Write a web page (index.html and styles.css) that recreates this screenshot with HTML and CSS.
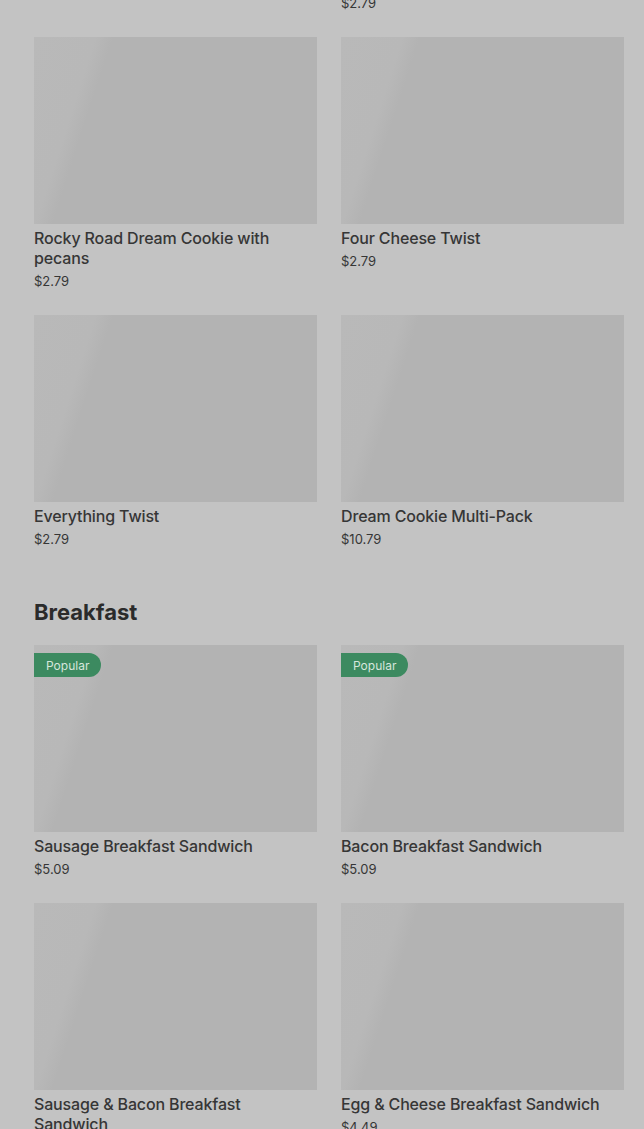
FILE: index.html
```html
<!DOCTYPE html>
<html>
<head>
<meta charset="utf-8">
<link rel="stylesheet" href="styles.css">
</head>
<body>
<main class="menu">
  <section class="category category-first">
    <div class="grid">
      <div class="card">
        <div class="thumb"></div>
        <div class="title">Cinnamon Dream Cookie</div>
      </div>
      <div class="card">
        <div class="thumb"></div>
        <div class="title">Cheddar Twist</div>
        <div class="price">$2.79</div>
      </div>
      <div class="card">
        <div class="thumb"></div>
        <div class="title">Rocky Road Dream Cookie with pecans</div>
        <div class="price">$2.79</div>
      </div>
      <div class="card">
        <div class="thumb"></div>
        <div class="title">Four Cheese Twist</div>
        <div class="price">$2.79</div>
      </div>
      <div class="card">
        <div class="thumb"></div>
        <div class="title">Everything Twist</div>
        <div class="price">$2.79</div>
      </div>
      <div class="card">
        <div class="thumb"></div>
        <div class="title">Dream Cookie Multi-Pack</div>
        <div class="price">$10.79</div>
      </div>
    </div>
  </section>

  <section class="category">
    <h2 class="heading">Breakfast</h2>
    <div class="grid">
      <div class="card">
        <div class="thumb"><span class="badge">Popular</span></div>
        <div class="title">Sausage Breakfast Sandwich</div>
        <div class="price">$5.09</div>
      </div>
      <div class="card">
        <div class="thumb"><span class="badge">Popular</span></div>
        <div class="title">Bacon Breakfast Sandwich</div>
        <div class="price">$5.09</div>
      </div>
      <div class="card">
        <div class="thumb"></div>
        <div class="title">Sausage &amp; Bacon Breakfast Sandwich</div>
        <div class="price">$5.49</div>
      </div>
      <div class="card">
        <div class="thumb"></div>
        <div class="title">Egg &amp; Cheese Breakfast Sandwich</div>
        <div class="price">$4.49</div>
      </div>
    </div>
  </section>
</main>
</body>
</html>
```

FILE: styles.css
```css
* { box-sizing: border-box; }
html, body { margin: 0; padding: 0; }
body {
  background: #c3c3c3;
  color: #2e2e2e;
  font-family: Inter, "Liberation Sans", sans-serif;
  overflow: hidden;
}
.menu {
  padding: 0 20px 0 34px;
}
.category-first {
  margin-top: -221px;
}
.grid {
  display: grid;
  grid-template-columns: 283px 283px;
  column-gap: 24px;
  row-gap: 25px;
}
.card {
  display: flex;
  flex-direction: column;
}
.thumb {
  position: relative;
  height: 187px;
  background: linear-gradient(108deg, #b9b9b9 0%, #b8b8b8 18%, #b3b3b3 23%, #b3b3b3 100%);
}
.title {
  margin-top: 4px;
  font-size: 16px;
  line-height: 20px;
  font-weight: 500;
  color: #363636;
  letter-spacing: -0.15px;
}
.price {
  margin-top: 4px;
  font-size: 13px;
  line-height: 18px;
  color: #363636;
}
.heading {
  margin: 50px 0 19px;
  font-size: 22px;
  line-height: 28px;
  font-weight: 700;
  color: #2b2b2b;
  letter-spacing: 0;
}
.badge {
  position: absolute;
  left: 0;
  top: 8px;
  height: 24px;
  padding: 0 12px;
  display: flex;
  align-items: center;
  background: #3c8a60;
  color: #d6e6dc;
  font-size: 12px;
  border-radius: 0 12px 12px 0;
}
```
